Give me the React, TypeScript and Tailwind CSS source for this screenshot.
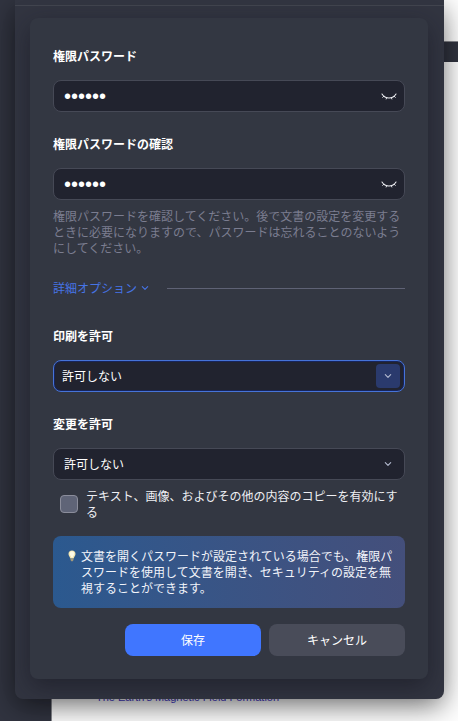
import { useState, type ReactNode } from "react";

function ClosedEyeIcon() {
  return (
    <svg width="16" height="16" viewBox="0 0 16 16" fill="none" stroke="#f1f2f6" strokeLinecap="round" aria-hidden="true">
      <path d="M1 6C2.500 8.500 5 10 8 10S13.500 8.500 15 6" strokeWidth="1.100" />
      <path d="M2.800 8.200 1.700 9.400M5.700 9.700 5.200 11M10.300 9.700 10.800 11M13.200 8.200 14.300 9.400" strokeWidth="0.900" />
    </svg>
  );
}

function ChevronIcon({ className }: { className?: string }) {
  return (
    <svg className={className} width="8" height="8" viewBox="0 0 8 8" fill="none" stroke="currentColor" strokeWidth="1.100" strokeLinecap="round" strokeLinejoin="round" aria-hidden="true">
      <path d="M1.300 2.600 4 5.300 6.700 2.600" />
    </svg>
  );
}

function BulbIcon() {
  return (
    <svg className="shrink-0" width="10" height="16" viewBox="0 0 10 16" aria-hidden="true">
      <path d="M5 2.500C2.800 2.500 1.500 4 1.500 5.900c0 1.900 1.500 2.900 1.900 4.600h3.200c.4-1.700 1.900-2.700 1.900-4.600C8.500 4 7.200 2.500 5 2.500Z" fill="#f3e6b0" />
      <path d="M5 3.300C3.700 3.300 2.700 4.500 2.700 5.700c0 1.300 1.300 2.300 1.600 3.800h1.400C6 8 7.300 7 7.300 5.700 7.300 4.500 6.300 3.300 5 3.300Z" fill="#fffbe6" />
      <path d="M3.500 10.500h3v1.500L5.700 13.200H4.300L3.500 12Z" fill="#a39a7c" />
    </svg>
  );
}

function Label({ htmlFor, children }: { htmlFor: string; children: ReactNode }) {
  return (
    <label htmlFor={htmlFor} className="block font-bold text-white">
      {children}
    </label>
  );
}

function PasswordField({ id, label }: { id: string; label: string }) {
  const [value, setValue] = useState("secret");
  const [visible, setVisible] = useState(false);
  return (
    <div className="flex flex-col gap-4">
      <Label htmlFor={id}>{label}</Label>
      <div className="flex h-8 items-center rounded-lg border border-[#464956] bg-[#21232f] pr-[7px] pl-[10px]">
        <input
          id={id}
          type={visible ? "text" : "password"}
          value={value}
          onChange={(e) => setValue(e.target.value)}
          className="h-full min-w-0 flex-1 bg-transparent font-['Liberation_Sans',Arial,sans-serif] text-xl text-white outline-none"
        />
        <button type="button" aria-label="パスワードを表示" onClick={() => setVisible(!visible)}>
          <ClosedEyeIcon />
        </button>
      </div>
    </div>
  );
}

function SelectField({ id, label, active = false }: { id: string; label: string; active?: boolean }) {
  return (
    <div className="flex flex-col gap-4">
      <Label htmlFor={id}>{label}</Label>
      <div className="grid items-center">
        <select
          id={id}
          className={
            "col-start-1 row-start-1 h-8 w-full appearance-none rounded-lg border bg-[#21232f] pr-8 text-white outline-none " +
            (active ? "border-[#4673d8] pl-2 shadow-[inset_0_0_0_1px_#17245a]" : "border-[#464956] pl-[10px]")
          }
        >
          <option>許可しない</option>
          <option>許可する</option>
        </select>
        <span
          className={
            "pointer-events-none col-start-1 row-start-1 mr-[5px] flex size-6 items-center justify-center justify-self-end rounded text-[#b4bbd0] " +
            (active ? "bg-[#2a3a6d]" : "")
          }
        >
          <ChevronIcon />
        </span>
      </div>
    </div>
  );
}

function DocumentBackdrop() {
  return (
    <div className="absolute inset-0 flex flex-col overflow-hidden bg-[#313440] pl-[51px]">
      <div className="h-[42px] shrink-0 border-b border-[#8b8c92] bg-white" />
      <div className="mt-5 flex flex-1 flex-col justify-end border-l border-[#8b8c92] bg-white pb-4 pl-11">
        <p className="font-['Liberation_Sans',Arial,sans-serif] text-[11px] leading-4 whitespace-nowrap text-[#4438c8]">
          The Earth's Magnetic Field Formation
        </p>
      </div>
    </div>
  );
}

export default function App() {
  return (
    <div className="relative min-h-screen overflow-hidden pr-[14px] pb-[22px] pl-[15px] font-['Noto_Sans_CJK_JP','Noto_Sans',sans-serif] text-xs leading-4">
      <DocumentBackdrop />
      <main className="relative rounded-b-lg bg-[#323541] px-[15px] pb-5 shadow-[0_8px_28px_rgba(0,0,0,0.5)]">
        <div className="-mx-[15px] h-[6px] border-b border-[#42454f]" />
        <form
          onSubmit={(e) => e.preventDefault()}
          className="mt-3 mr-px rounded-lg bg-[#333742] px-[23px] pt-[30px] pb-[23px] shadow-[0_8px_24px_rgba(18,18,28,0.5)]"
        >
          <div className="flex flex-col gap-6">
            <PasswordField id="password" label="権限パスワード" />
            <div className="flex flex-col gap-2">
              <PasswordField id="confirm" label="権限パスワードの確認" />
              <p className="text-[#7b7d90]">
                権限パスワードを確認してください。後で文書の設定を変更するときに必要になりますので、パスワードは忘れることのないようにしてください。
              </p>
            </div>
            <div className="flex items-center gap-[18px]">
              <button type="button" className="flex items-center gap-1 text-[#4674e6]">
                詳細オプション
                <ChevronIcon />
              </button>
              <hr className="flex-1 border-[#5f6275]" />
            </div>
          </div>
          <div className="mt-8 flex flex-col gap-6">
            <SelectField id="printing" label="印刷を許可" active />
            <div className="flex flex-col gap-2">
              <SelectField id="changes" label="変更を許可" />
              <label className="flex items-center gap-2 pl-[7px] text-[#eeeff3]">
                <input
                  type="checkbox"
                  className="size-[18px] shrink-0 appearance-none rounded border border-[#8b8d9b] bg-[#5f6477] checked:bg-[#4076ff]"
                />
                <span>テキスト、画像、およびその他の内容のコピーを有効にする</span>
              </label>
            </div>
          </div>
          <div className="mt-4 flex items-start gap-1 rounded-lg bg-linear-to-r from-[#2b598f] to-[#444f7b] py-3 pr-3 pl-[14px] text-[#f2f4fa]">
            <BulbIcon />
            <p>文書を開くパスワードが設定されている場合でも、権限パスワードを使用して文書を開き、セキュリティの設定を無視することができます。</p>
          </div>
          <div className="mt-4 flex justify-end gap-2">
            <button type="submit" className="h-8 w-[136px] rounded-lg bg-[#4076ff] text-white">
              保存
            </button>
            <button type="button" className="h-8 w-[136px] rounded-lg bg-[#494c59] text-white">
              キャンセル
            </button>
          </div>
        </form>
      </main>
    </div>
  );
}
